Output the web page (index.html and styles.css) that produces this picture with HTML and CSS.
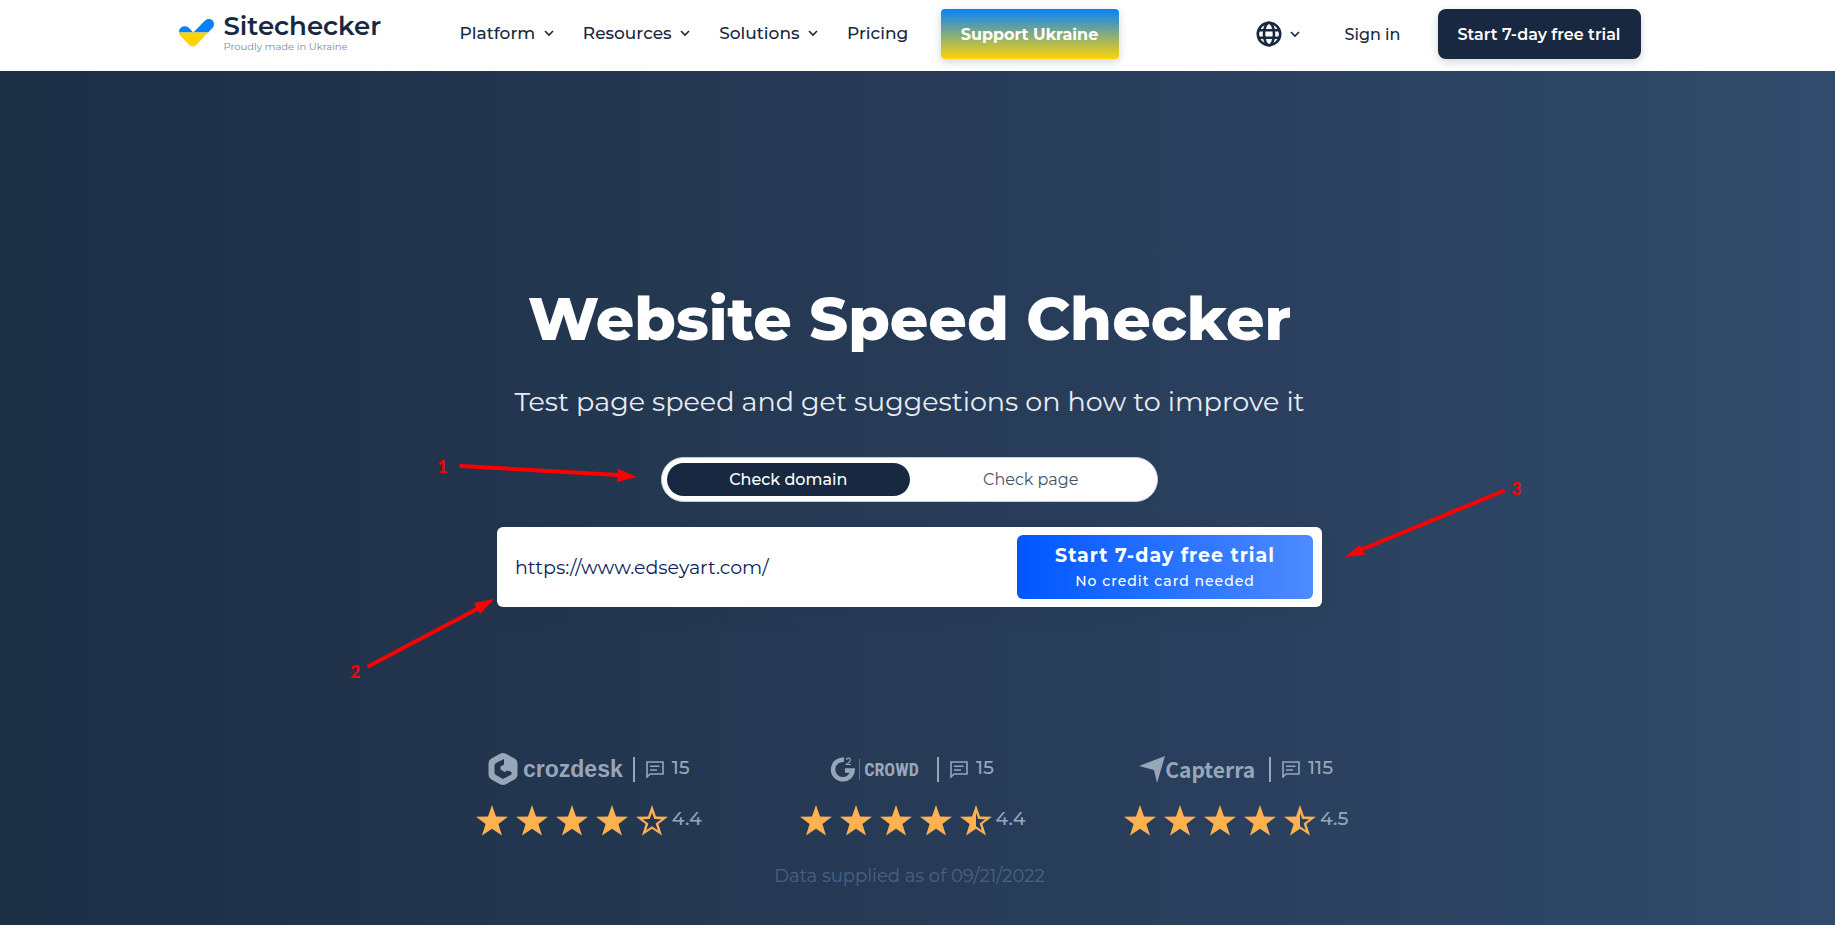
FILE: index.html
```html
<!DOCTYPE html>
<html lang="en">
<head>
  <meta charset="UTF-8">
  <meta name="viewport" content="width=device-width, initial-scale=1">
  <title>Website Speed Checker</title>
  <link rel="stylesheet" href="styles.css">
</head>
<body>
  <!-- shared icons -->
  <svg class="sprite" width="0" height="0" aria-hidden="true">
    <symbol id="chevron" viewBox="0 0 10 7"><path d="M1 1l4 4 4-4" fill="none" stroke="#182841" stroke-width="1.6"/></symbol>
    <symbol id="comment" viewBox="0 0 18 17"><path d="M1 16V1h16v12H4z" fill="none" stroke="#98a6ba" stroke-width="1.6"/><path d="M4 5.2h9.500M4 9h7" fill="none" stroke="#98a6ba" stroke-width="1.6"/></symbol>
    <symbol id="star" viewBox="0 0 32 31"><path d="M16 0l4 11.500 12 .3-9.600 7.300L26 30.500l-10-6.800-10 6.800 3.600-11.400L0 11.800l12-.3z" fill="#ffb04f"/></symbol>
    <symbol id="star-empty" viewBox="0 0 32 31"><path fill-rule="evenodd" d="M16 0l4 11.500 12 .3-9.600 7.300L26 30.500l-10-6.800-10 6.800 3.600-11.400L0 11.800l12-.3zM16 7.800l-2.300 6.200-7 .2 5.600 4.200-2 6.800 5.700-4 5.700 4-2-6.800 5.600-4.200-7-.2z" fill="#ffb04f"/></symbol>
    <symbol id="star-half" viewBox="0 0 32 31"><path fill-rule="evenodd" d="M16 0l4 11.500 12 .3-9.600 7.300L26 30.500l-10-6.800-10 6.800 3.600-11.400L0 11.800l12-.3zM16 7.800v13.400l5.700 4-2-6.800 5.600-4.200-7-.2z" fill="#ffb04f"/></symbol>
  </svg>

  <header class="header">
    <div class="container">
      <a class="logo" href="#">
        <svg class="logo-mark" width="35" height="28" viewBox="0 0 35 28" aria-hidden="true">
          <path d="M0 13.500C0 9 3 7.300 6 7.300c2 0 3 .7 4.300 2L14.300 13.500 25.500 2C27 .5 28.300 0 30 0c3 0 5 2.300 5 5 0 1.800-.6 3.200-2 4.500L29.200 13.500z" fill="#0583fc"/>
          <path d="M0 13.500h29.200L17 26.200c-2 1.700-4.600 1.700-6.500 0L1.500 17C.5 15.900 0 15 0 13.500z" fill="#fed405"/>
        </svg>
        <span class="logo-text">
          <strong>Sitechecker</strong>
          <small>Proudly made in Ukraine</small>
        </span>
      </a>
      <nav class="nav">
        <a href="#">Platform <svg class="chevron"><use href="#chevron"/></svg></a>
        <a href="#">Resources <svg class="chevron"><use href="#chevron"/></svg></a>
        <a href="#">Solutions <svg class="chevron"><use href="#chevron"/></svg></a>
        <a href="#">Pricing</a>
      </nav>
      <a class="btn btn-ukraine" href="#">Support Ukraine</a>
      <div class="account">
        <button class="lang" type="button" aria-label="Language">
          <svg width="26" height="26" viewBox="0 0 26 26" fill="none" stroke="#182841" stroke-width="2.600" aria-hidden="true">
            <circle cx="13" cy="13" r="11.200"/>
            <ellipse cx="13" cy="13" rx="5" ry="11.200"/>
            <path d="M2.500 9.300h21M2.500 16.700h21"/>
          </svg>
          <svg class="chevron"><use href="#chevron"/></svg>
        </button>
        <a class="signin" href="#">Sign in</a>
        <a class="btn btn-trial" href="#">Start 7-day free trial</a>
      </div>
    </div>
  </header>

  <main class="hero">
    <h1>Website Speed Checker</h1>
    <p class="subtitle">Test page speed and get suggestions on how to improve it</p>

    <form class="checker">
      <div class="toggle">
        <input type="radio" name="mode" id="domain" checked>
        <label for="domain">Check domain</label>
        <input type="radio" name="mode" id="page">
        <label for="page">Check page</label>
      </div>
      <div class="search">
        <input type="text" value="https://www.edseyart.com/" aria-label="Website address">
        <button type="submit">
          <span class="cta">Start 7-day free trial</span>
          <span class="note">No credit card needed</span>
        </button>
      </div>
    </form>

    <div class="ratings">
      <div class="rating">
        <div class="source">
          <svg width="30" height="32" viewBox="0 0 30 32" aria-hidden="true">
            <path fill-rule="evenodd" d="M12 .8q3-1.500 6 0l9 5q2.500 1.500 2.500 4.500v11.400q0 3-2.500 4.500l-9 5q-3 1.500-6 0l-9-5Q.5 24.700.5 21.700V10.300Q.5 7.300 3 5.800zM16 6L8 10q-1.500 1-1.500 2.500v7Q6.500 21 8 22l7 4 8.500-4.500V19l-4-1.500-3 1.500-4-2.500v-3l3.500-2z" fill="#98a6ba"/>
          </svg>
          <span class="brand crozdesk">crozdesk</span>
          <span class="reviews"><svg class="comment"><use href="#comment"/></svg>15</span>
        </div>
        <div class="stars">
          <svg><use href="#star"/></svg><svg><use href="#star"/></svg><svg><use href="#star"/></svg><svg><use href="#star"/></svg><svg><use href="#star-empty"/></svg>
          <span>4.4</span>
        </div>
      </div>
      <div class="rating">
        <div class="source">
          <svg width="25" height="25" viewBox="0 0 25 25" aria-hidden="true">
            <path d="M13 2.800A9.800 9.800 0 1 0 21.600 13.500H14" fill="none" stroke="#98a6ba" stroke-width="4.500"/>
            <path d="M15.500 3Q15.800.8 17.500.8T19.400 3Q19.400 4.300 15.500 7.500h4.500" fill="none" stroke="#98a6ba" stroke-width="1.200"/>
          </svg>
          <span class="brand crowd">CROWD</span>
          <span class="reviews"><svg class="comment"><use href="#comment"/></svg>15</span>
        </div>
        <div class="stars">
          <svg><use href="#star"/></svg><svg><use href="#star"/></svg><svg><use href="#star"/></svg><svg><use href="#star"/></svg><svg><use href="#star-half"/></svg>
          <span>4.4</span>
        </div>
      </div>
      <div class="rating">
        <div class="source">
          <svg width="26" height="27" viewBox="0 0 26 27" aria-hidden="true">
            <path d="M0 10L26 0 18 27 15 14z" fill="#98a6ba"/>
          </svg>
          <span class="brand capterra">Capterra</span>
          <span class="reviews"><svg class="comment"><use href="#comment"/></svg>115</span>
        </div>
        <div class="stars">
          <svg><use href="#star"/></svg><svg><use href="#star"/></svg><svg><use href="#star"/></svg><svg><use href="#star"/></svg><svg><use href="#star-half"/></svg>
          <span>4.5</span>
        </div>
      </div>
    </div>
    <p class="supplied">Data supplied as of 09/21/2022</p>
  </main>

  <!-- numbered steps drawn over the page -->
  <svg class="steps" viewBox="0 0 1835 925">
    <g stroke="#f00" stroke-width="4" stroke-linecap="round">
      <path d="M461 466l157 9"/>
      <path d="M369 666l108-57"/>
      <path d="M1503 491l-140 58"/>
    </g>
    <g fill="#f00">
      <path d="M637 477l-20 5 1-13z"/>
      <path d="M494 599l-20 4 6 11z"/>
      <path d="M1345 557l20-2-5-10z"/>
    </g>
    <text x="437" y="473">1</text>
    <text x="350" y="678">2</text>
    <text x="1511" y="495">3</text>
  </svg>
</body>
</html>
```
FILE: styles.css
```css
* {
  box-sizing: border-box;
}
body {
  margin: 0;
  min-height: 100vh;
  display: flex;
  flex-direction: column;
  font-family: Montserrat, Inter, sans-serif;
  color: #182841;
}
a {
  color: inherit;
  text-decoration: none;
}
button,
input {
  font-family: inherit;
}
.sprite {
  position: absolute;
}

/* header */
.header {
  background: #fff;
  padding: 9px 16px 12px 0;
}
.container {
  max-width: 1462px;
  height: 50px;
  margin: 0 auto;
  display: flex;
  align-items: center;
}
.logo {
  display: flex;
  gap: 10px;
  width: 281px;
  padding-bottom: 4px;
}
.logo-mark {
  margin-top: 8px;
}
.logo-text strong {
  display: block;
  font-family: Montserrat, Inter, sans-serif;
  font-size: 26px;
  line-height: 30px;
  font-weight: 600;
}
.logo-text small {
  display: block;
  font-size: 10px;
  line-height: 12px;
  color: #7c8a9e;
}
.nav {
  display: flex;
  gap: 29px;
  width: 481px;
  padding-bottom: 2px;
  font-size: 17px;
  font-weight: 500;
}
.chevron {
  width: 10px;
  height: 7px;
  margin-left: 4px;
  vertical-align: 2px;
}
.btn {
  height: 50px;
  line-height: 52px;
  color: #fff;
  font-size: 16px;
  font-weight: 700;
  text-align: center;
  white-space: nowrap;
  box-shadow: 0 3px 8px rgba(24, 40, 65, 0.2);
}
.btn-ukraine {
  width: 178px;
  border-radius: 4px;
  background: linear-gradient(#0583fc, #fed405);
}
.account {
  margin-left: auto;
  display: flex;
  align-items: center;
}
.lang {
  display: flex;
  align-items: center;
  gap: 4px;
  padding: 0;
  border: 0;
  background: none;
}
.signin {
  margin: 0 37px 0 44px;
  font-size: 16px;
  font-weight: 500;
}
.btn-trial {
  width: 203px;
  border-radius: 8px;
  background: #182841;
  font-weight: 600;
}

/* hero */
.hero {
  flex: 1;
  padding: 210px 16px 30px 0;
  background: linear-gradient(90deg, #1c2e44, #23364f 30%, #2a405e 70%, #304b6b);
  text-align: center;
}
h1 {
  margin: 0;
  color: #fff;
  font-size: 60px;
  line-height: 76px;
  font-weight: 800;
}
.subtitle {
  margin: 26px 0 36px;
  color: #e8ecf1;
  font-size: 27px;
  line-height: 38px;
}
.checker {
  max-width: 825px;
  margin: 0 auto;
}
.toggle {
  display: flex;
  width: 497px;
  height: 45px;
  margin: 0 auto 25px;
  padding: 5px;
  border: 1px solid #c5cfda;
  border-radius: 23px;
  background: #fff;
}
.toggle input {
  position: absolute;
  opacity: 0;
}
.toggle label {
  flex: 1;
  border-radius: 17px;
  color: #43536a;
  font-size: 16px;
  line-height: 34px;
}
.toggle input:checked + label {
  background: #182841;
  color: #fff;
  font-weight: 500;
}
.search {
  display: flex;
  height: 80px;
  padding: 8px 9px;
  border-radius: 6px;
  background: #fff;
  box-shadow: 0 8px 20px rgba(24, 40, 65, 0.05);
}
.search input {
  flex: 1;
  min-width: 0;
  padding: 0 9px;
  border: 0;
  background: none;
  color: #0b1e5b;
  font-size: 19px;
}
.search button {
  width: 296px;
  border: 0;
  border-radius: 6px;
  background: linear-gradient(90deg, #0057ff, #4d8bff);
  color: #fff;
  letter-spacing: 1px;
}
.cta,
.note {
  display: block;
}
.cta {
  font-size: 19px;
  line-height: 28px;
  font-weight: 700;
}
.note {
  font-size: 14px;
  line-height: 22px;
  font-weight: 500;
}

/* ratings */
.ratings {
  max-width: 977px;
  margin: 144px auto 0;
  padding-left: 6px;
  display: grid;
  grid-template-columns: repeat(3, 1fr);
  color: #98a6ba;
  font-size: 19px;
}
.source {
  display: flex;
  align-items: center;
  justify-content: center;
  height: 36px;
}
.brand {
  font-weight: 700;
}
.crozdesk {
  margin-left: 5px;
  font-family: "Liberation Sans", sans-serif;
  font-size: 23px;
}
.crowd {
  margin: 0 8px 0 3px;
  padding-left: 4px;
  border-left: 1px solid #5f7087;
  font-family: "Roboto Condensed", "Liberation Sans Narrow", Roboto, sans-serif;
  font-size: 18px;
}
.capterra {
  margin-right: 4px;
  font-family: "Noto Sans CJK SC", sans-serif;
  font-size: 21px;
  line-height: 28px;
}
.reviews {
  display: flex;
  gap: 8px;
  height: 25px;
  margin-left: 10px;
  padding-left: 11px;
  border-left: 2px solid #98a6ba;
  font-weight: 500;
  line-height: 22px;
}
.comment {
  width: 18px;
  height: 17px;
  margin-top: 4px;
}
.stars {
  display: flex;
  justify-content: center;
  gap: 8px;
  margin-top: 18px;
  line-height: 28px;
  font-weight: 500;
}
.stars svg {
  width: 32px;
  height: 31px;
}
.stars span {
  margin-left: -4px;
}
.supplied {
  margin: 24px 0 0;
  color: #4b6184;
  font-size: 18px;
  line-height: 32px;
}

.steps {
  position: absolute;
  top: 0;
  left: 0;
  width: 100%;
  pointer-events: none;
}
.steps text {
  fill: #f00;
  font-family: Calibri, Carlito, "Open Sans", sans-serif;
  font-size: 20px;
  font-weight: 700;
}
```
